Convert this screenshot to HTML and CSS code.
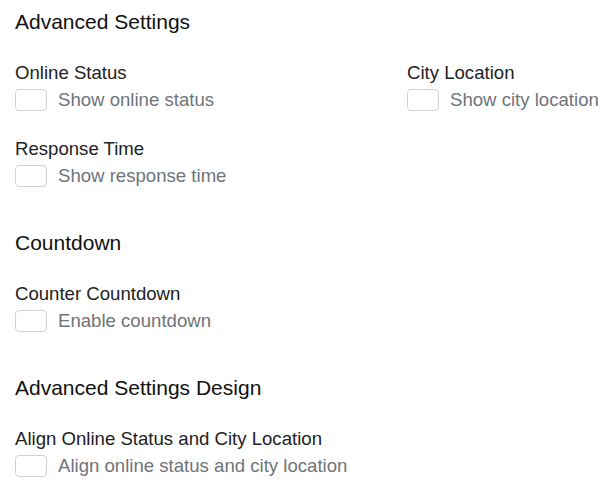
FILE: index.html
```html
<!DOCTYPE html>
<html lang="en">
<head>
    <meta charset="UTF-8">
    <meta name="viewport" content="width=device-width, initial-scale=1.0">
    <title>Advanced Settings</title>
    <link rel="stylesheet" href="styles.css">
</head>
<body>
    <div class="section">
        <h2>Advanced Settings</h2>
        <div class="grid">
            <div class="field">
                <div class="label">Online Status</div>
                <label class="check"><span class="box"></span>Show online status</label>
            </div>
            <div class="field">
                <div class="label">City Location</div>
                <label class="check"><span class="box"></span>Show city location</label>
            </div>
            <div class="field">
                <div class="label">Response Time</div>
                <label class="check"><span class="box"></span>Show response time</label>
            </div>
        </div>
    </div>

    <div class="section">
        <h2>Countdown</h2>
        <div class="field">
            <div class="label">Counter Countdown</div>
            <label class="check"><span class="box"></span>Enable countdown</label>
        </div>
    </div>

    <div class="section">
        <h2>Advanced Settings Design</h2>
        <div class="field">
            <div class="label">Align Online Status and City Location</div>
            <label class="check"><span class="box"></span>Align online status and city location</label>
        </div>
    </div>
</body>
</html>
```

FILE: styles.css
```css
body {
    font-family: "Liberation Sans", Arial, sans-serif;
    margin: 0;
    padding: 10px 0 0 15px;
    background-color: #fff;
    color: #222;
}
h2 {
    font-size: 21px;
    line-height: 24px;
    font-weight: normal;
    color: #111;
    margin: 0 0 28px;
}
.section {
    padding-bottom: 17px;
}
.section:last-child {
    padding-bottom: 0;
}
.section:last-child .field {
    margin-bottom: 0;
}
.grid {
    display: grid;
    grid-template-columns: 392px 1fr;
}
.field {
    margin-bottom: 27px;
    white-space: nowrap;
}
.label {
    font-size: 18.6px;
    line-height: 22px;
    color: #222;
    margin-bottom: 5px;
}
.check {
    display: flex;
    align-items: center;
    gap: 11px;
    height: 22px;
    font-size: 18.6px;
    color: #6f7479;
}
.box {
    flex: none;
    width: 30px;
    height: 20px;
    border: 1px solid #cfd3d7;
    border-radius: 4px;
    background-color: #fff;
}
```
